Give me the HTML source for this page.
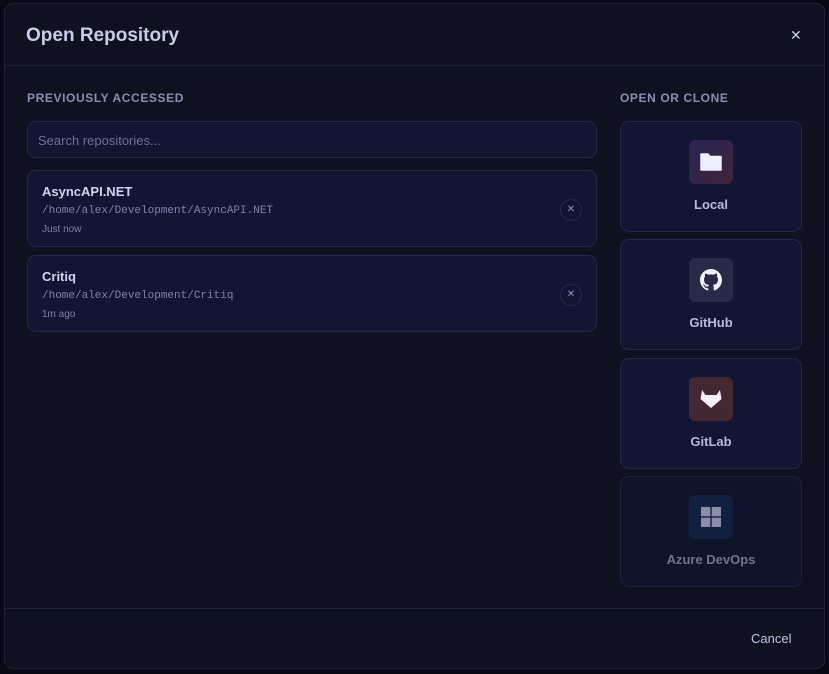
<!DOCTYPE html>
<html><head><style>
*{box-sizing:border-box;margin:0;padding:0}
body{width:829px;height:674px;background:#080b15;font-family:"Liberation Sans",sans-serif;position:relative;overflow:hidden}
.dlg{position:absolute;left:4px;top:3px;width:821px;height:666px;background:#0d1120;border:1px solid #1e2438;border-radius:9px}
.in{position:absolute;left:-1px;top:-1px;right:-1px;bottom:-1px}
.title{position:absolute;left:22px;top:22px;font-size:19px;font-weight:bold;color:#c8cce6}
.close{position:absolute;left:786px;top:24px;color:#c8cce6;font-size:14px}
.hl{position:absolute;left:0;right:0;height:1px;background:#1e2438}
.lab{position:absolute;font-size:12px;font-weight:bold;letter-spacing:.6px;color:#8a8fb0}
.search{position:absolute;left:23px;top:118px;width:570px;height:37px;background:#121633;border:1px solid #222848;border-radius:9px;color:#6e7394;font-size:13px;padding:11px 10px}
.item{position:absolute;left:23px;width:570px;height:77px;background:#121633;border:1px solid #222848;border-radius:9px}
.item .n{position:absolute;left:14px;top:13px;font-size:13px;font-weight:bold;color:#d0d4ee}
.item .p{position:absolute;left:14px;top:34px;font-family:"Liberation Mono",monospace;font-size:11px;color:#7e84a6}
.item .t{position:absolute;left:14px;top:53px;font-size:10px;color:#7e84a6}
.item .x{position:absolute;left:532px;top:28px;width:22px;height:22px;border:1px solid #262c4c;border-radius:50%;color:#8a8fc0;font-size:10px;text-align:center;line-height:20px}
.card{position:absolute;left:616px;width:182px;height:111px;background:#121633;border:1px solid #222848;border-radius:9px}
.card .ic{position:absolute;left:68px;top:18px;width:44px;height:44px;border-radius:6px;display:flex;align-items:center;justify-content:center}
.card .l{position:absolute;left:0;right:0;top:75px;text-align:center;font-size:13px;font-weight:bold;color:#b8bcd8}
</style></head><body>
<div class="dlg"><div class="in">
<div class="title">Open Repository</div>
<div class="close">✕</div>
<div class="hl" style="top:62px"></div>
<div class="lab" style="left:23px;top:88px">PREVIOUSLY ACCESSED</div>
<div class="lab" style="left:616px;top:88px">OPEN OR CLONE</div>
<div class="search">Search repositories...</div>
<div class="item" style="top:167px"><div class="n">AsyncAPI.NET</div><div class="p">/home/alex/Development/AsyncAPI.NET</div><div class="t">Just now</div><div class="x">✕</div></div>
<div class="item" style="top:252px"><div class="n">Critiq</div><div class="p">/home/alex/Development/Critiq</div><div class="t">1m ago</div><div class="x">✕</div></div>
<div class="card" style="top:118px"><div class="ic" style="background:linear-gradient(135deg,#2a2456,#3e2438)"><svg width="24" height="20" viewBox="0 0 24 20"><path d="M2 2h7l2 2.5h11v13.5H2z" fill="#eef0ff" stroke="#eef0ff" stroke-linejoin="round" stroke-width="1.5"/></svg></div><div class="l">Local</div></div>
<div class="card" style="top:236px"><div class="ic" style="background:#272b47"><svg width="22" height="22" viewBox="0 0 16 16"><path fill="#f0f0ff" d="M8 0C3.58 0 0 3.58 0 8c0 3.54 2.29 6.53 5.47 7.590.4.07.55-.17.55-.38v-1.33c-2.23.48-2.7-1.07-2.7-1.07-.36-.92-.89-1.170-.89-1.17-.73-.5.05-.49.05-.49.8.06 1.23.83 1.23.83.72 1.22 1.87.87 2.33.67.07-.52.28-.87.51-1.07-1.78-.2-3.64-.89-3.64-3.95 0-.87.31-1.59.82-2.15-.08-.2-.36-1.02.08-2.12 0 0 .67-.21 2.2.82A7.6 7.6 0 0 1 8 3.87c.68 0 1.36.09 2 .27 1.53-1.04 2.2-.82 2.2-.82.44 1.1.16 1.92.08 2.12.51.56.82 1.27.82 2.15 0 3.07-1.87 3.75-3.65 3.95.29.25.54.73.54 1.48v2.2c0 .21.15.46.55.38A8 8 0 0 0 16 8c0-4.42-3.58-8-8-8z"/></svg></div><div class="l">GitHub</div></div>
<div class="card" style="top:355px"><div class="ic" style="background:#432832"><svg width="22" height="20" viewBox="0 0 22 20"><path fill="#f4f0ff" d="M2 1l3.5 5h11L20 1l1.5 9L11 19 0.5 10z"/></svg></div><div class="l">GitLab</div></div>
<div class="card" style="top:473px;background:#10142a;border-color:#1c2240"><div class="ic" style="background:#12203f"><svg width="20" height="20" viewBox="0 0 20 20" fill="#8a8ea6"><rect x="0" y="0" width="9.3" height="9.3"/><rect x="10.7" y="0" width="9.3" height="9.3"/><rect x="0" y="10.7" width="9.3" height="9.3"/><rect x="10.7" y="10.7" width="9.3" height="9.3"/></svg></div><div class="l" style="color:#6e7392">Azure DevOps</div></div>
<div class="hl" style="top:605px"></div>
<div style="position:absolute;left:747px;top:628px;font-size:13px;color:#c0c4e0">Cancel</div>
</div></div>
</body></html>
